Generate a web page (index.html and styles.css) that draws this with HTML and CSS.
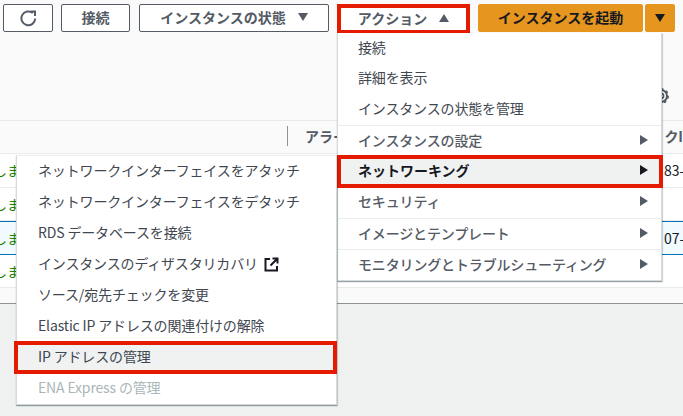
FILE: index.html
```html
<!DOCTYPE html>
<html lang="ja">
<head>
  <meta charset="UTF-8">
  <title>インスタンス</title>
  <link rel="stylesheet" href="styles.css">
</head>

<body>

  <div class="panel">
    <div class="toolbar">
      <button class="btn btn-refresh" aria-label="更新">
        <svg width="17" height="17" viewBox="0 0 17 17"><path d="M15.200 8.500A6.900 6.900 0 1 1 12.800 3.100" fill="none" stroke="#545b64" stroke-width="2"/><path d="M10.500 0.500h5.500v5.500h-2V2.500h-3.500z" fill="#545b64"/></svg>
      </button>
      <button class="btn btn-connect">接続</button>
      <button class="btn btn-state">インスタンスの状態 <span class="caret-down"></span></button>
      <button class="btn btn-actions">アクション <span class="caret-up"></span></button>
      <button class="btn btn-launch">インスタンスを起動</button>
      <button class="btn btn-split" aria-label="開く"><span class="caret-down dark"></span></button>
    </div>
    <div class="tools">
      <svg width="18" height="18" viewBox="0 0 18 18"><circle cx="9" cy="9" r="2.600" fill="none" stroke="#545b64" stroke-width="1.600"/><circle cx="9" cy="9" r="6" fill="none" stroke="#545b64" stroke-width="2"/><circle cx="9" cy="9" r="7.200" fill="none" stroke="#545b64" stroke-width="1.600" stroke-dasharray="2.600 3"/></svg>
    </div>
    <div class="table-head">
      <div class="head-left"><span class="divider"></span>アラーム</div>
      <div class="head-right">クI</div>
    </div>
    <div class="row"><span class="state">しま</span><span class="cell-end">83-</span></div>
    <div class="row"><span class="state">しま</span></div>
    <div class="row row-selected"><span class="state">しま</span><span class="cell-end">07-</span></div>
    <div class="row"><span class="state">しま</span></div>
    <div class="table-foot"></div>
  </div>

  <ul class="menu menu-actions">
    <li class="item">接続</li>
    <li class="item">詳細を表示</li>
    <li class="item">インスタンスの状態を管理</li>
    <li class="item sub sep">インスタンスの設定<span class="caret-right"></span></li>
    <li class="item sub marked active">ネットワーキング<span class="caret-right black"></span></li>
    <li class="item sub">セキュリティ<span class="caret-right"></span></li>
    <li class="item sub sep">イメージとテンプレート<span class="caret-right"></span></li>
    <li class="item sub sep">モニタリングとトラブルシューティング<span class="caret-right"></span></li>
  </ul>

  <ul class="menu menu-network">
    <li class="item">ネットワークインターフェイスをアタッチ</li>
    <li class="item">ネットワークインターフェイスをデタッチ</li>
    <li class="item">RDS データベースを接続</li>
    <li class="item">インスタンスのディザスタリカバリ
      <svg class="ext" width="15" height="15" viewBox="0 0 15 15"><path d="M6 2H1.500v11.500h11.500V9M8.500 1.500h5v5M13 2L6.500 8.500" fill="none" stroke="#16191f" stroke-width="2"/></svg>
    </li>
    <li class="item">ソース/宛先チェックを変更</li>
    <li class="item">Elastic IP アドレスの関連付けの解除</li>
    <li class="item marked">IP アドレスの管理</li>
    <li class="item disabled">ENA Express の管理</li>
  </ul>

</body>
</html>
```

FILE: styles.css
```css
* {
  box-sizing: border-box;
}

body {
  font-family: "Noto Sans CJK JP", "Noto Sans", sans-serif;
  font-size: 14px;
  background: #eff1f1;
  margin: 0;
  height: 416px;
  overflow: hidden;
  position: relative;
  color: #16191f;
}

.panel {
  background: #fafafa;
  height: 304px;
  border-bottom: 1px solid #8d9292;
}

.toolbar {
  display: flex;
  align-items: flex-start;
  padding: 4px 0 0 3px;
  height: 33px;
}

.btn {
  height: 28px;
  border: 1px solid #545b64;
  border-radius: 2px;
  background: #fff;
  color: #545b64;
  font-family: inherit;
  font-size: 14px;
  font-weight: 700;
  padding: 0 0 2px;
  display: flex;
  align-items: center;
  justify-content: center;
}

.btn-refresh {
  width: 50px;
  padding: 0;
}

.btn-connect {
  width: 69px;
  margin-left: 8px;
}

.btn-state {
  width: 190px;
  margin-left: 9px;
  gap: 12px;
}

.btn-actions {
  width: 133px;
  height: 30px;
  margin-left: 8px;
  border: 4px solid #e41b00;
  border-radius: 0;
  gap: 12px;
}

.btn-launch {
  width: 165px;
  margin-left: 8px;
  background: #e6951f;
  border-color: #e6951f;
  color: #16191f;
}

.btn-split {
  width: 30px;
  margin-left: 2px;
  padding: 0;
  background: #e6951f;
  border-color: #e6951f;
}

.caret-down,
.caret-up,
.caret-right {
  display: inline-block;
  width: 0;
  height: 0;
}

.caret-down {
  border-left: 5px solid transparent;
  border-right: 5px solid transparent;
  border-top: 8px solid #545b64;
}

.caret-down.dark {
  border-top-color: #16191f;
}

.caret-up {
  border-left: 5px solid transparent;
  border-right: 5px solid transparent;
  border-bottom: 8px solid #545b64;
}

.caret-right {
  border-top: 5px solid transparent;
  border-bottom: 5px solid transparent;
  border-left: 8px solid #545b64;
}

.caret-right.black {
  border-left-color: #16191f;
}

.tools {
  height: 87px;
  display: flex;
  justify-content: flex-end;
  align-items: flex-end;
  padding: 0 13px 15px 0;
}

.table-head {
  height: 34px;
  padding-bottom: 3px;
  border-top: 1px solid #e9ebeb;
  border-bottom: 1px solid #e9ebeb;
  display: flex;
  align-items: center;
  justify-content: space-between;
  font-weight: 700;
  color: #545b64;
}

.head-left {
  display: flex;
  align-items: center;
  margin-left: 287px;
}

.divider {
  width: 1px;
  height: 20px;
  background: #879596;
  margin-right: 17px;
}

.head-right {
  white-space: nowrap;
}

.row {
  height: 33.5px;
  background: #fff;
  border-bottom: 1px solid #e9ebeb;
  display: flex;
  align-items: center;
  justify-content: space-between;
}

.row-selected {
  background: #f1faff;
  border-top: 1px solid #0073bb;
  border-bottom: 1px solid #0073bb;
}

.state {
  width: 21px;
  overflow: hidden;
  display: flex;
  justify-content: flex-end;
  white-space: nowrap;
  color: #1d8102;
}

.cell-end {
  width: 19px;
  overflow: hidden;
  white-space: nowrap;
}

.table-foot {
  height: 15px;
}

/* menus sit on top of the table */
.menu {
  position: absolute;
  margin: 0;
  padding: 0;
  list-style: none;
  background: #fff;
  border: 1px solid #d5dbdb;
  border-top-color: #eaeded;
  box-shadow: 0 1px 1px rgba(0, 28, 36, 0.3), 1px 1px 1px rgba(0, 28, 36, 0.15);
}

.menu-actions {
  left: 337px;
  top: 33px;
  width: 325px;
  border-top: 0;
}

.menu-actions .item {
  padding-left: 20px;
}

.menu-actions .item:first-child {
  height: 30px;
}

.menu-network {
  left: 16px;
  top: 155px;
  width: 321px;
}

.item {
  height: 31px;
  padding: 0 13px 3px 21px;
  display: flex;
  align-items: center;
  white-space: nowrap;
  color: #414750;
  letter-spacing: -0.15px;
}

.sub {
  font-weight: 500;
  color: #545b64;
  justify-content: space-between;
}

.sep {
  border-top: 1px solid #eaeded;
}

.active {
  font-weight: 700;
  color: #16191f;
  letter-spacing: 0;
}

.marked {
  background: #f0f2f2;
  outline: 4px solid #e41b00;
  outline-offset: -3px;
  position: relative;
}

.menu-actions .marked {
  margin-right: -1px;
  padding-right: 14px;
}

.menu-network .marked {
  margin-left: -2px;
  padding-left: 23px;
}

.disabled {
  color: #aab7b8;
}

.ext {
  margin: 3px 0 0 6px;
}
```
